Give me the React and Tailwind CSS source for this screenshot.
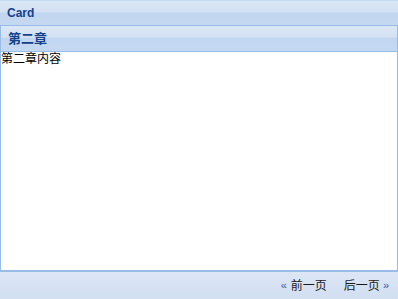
export default function App() {
  const cjk = { fontFamily: '"Liberation Sans", "Noto Sans CJK SC", sans-serif' };
  return (
    <div className="w-[398px] h-[299px] flex flex-col bg-white overflow-hidden" style={cjk}>
      <div className="h-[26px] shrink-0 flex items-center px-[7px] border-t border-b border-t-[#c9dbf1] border-b-[#99bbe8] bg-[linear-gradient(to_bottom,#dae7f6_0%,#d3e1f3_45%,#c1d6f0_50%,#c5d8f1_100%)]">
        <span className="text-[12px] font-bold text-[#15428b] leading-none">Card</span>
      </div>
      <div className="flex-1 flex flex-col border-l border-r border-[#99bbe8]">
        <div className="h-[26px] shrink-0 flex items-center px-[7px] border-b border-[#99bbe8] bg-[linear-gradient(to_bottom,#dae7f6_0%,#d3e1f3_45%,#c1d6f0_50%,#c5d8f1_100%)]">
          <span className="text-[13px] font-bold text-[#15428b] leading-none">第二章</span>
        </div>
        <div className="flex-1 bg-white text-[12px] text-black leading-[14px]">第二章内容</div>
      </div>
      <div className="h-[29px] shrink-0 border-t-2 border-[#99bbe8] bg-[linear-gradient(to_bottom,#dce6f5,#d1dff1)] flex items-center justify-end pr-[9px] text-[12px] text-[#1a1a1a]">
        <span className="text-[#3a5a9b] text-[11px] mr-[4px]">«</span>
        <span>前一页</span>
        <span className="ml-[17px]">后一页</span>
        <span className="text-[#3a5a9b] text-[11px] ml-[3px]">»</span>
      </div>
    </div>
  );
}
